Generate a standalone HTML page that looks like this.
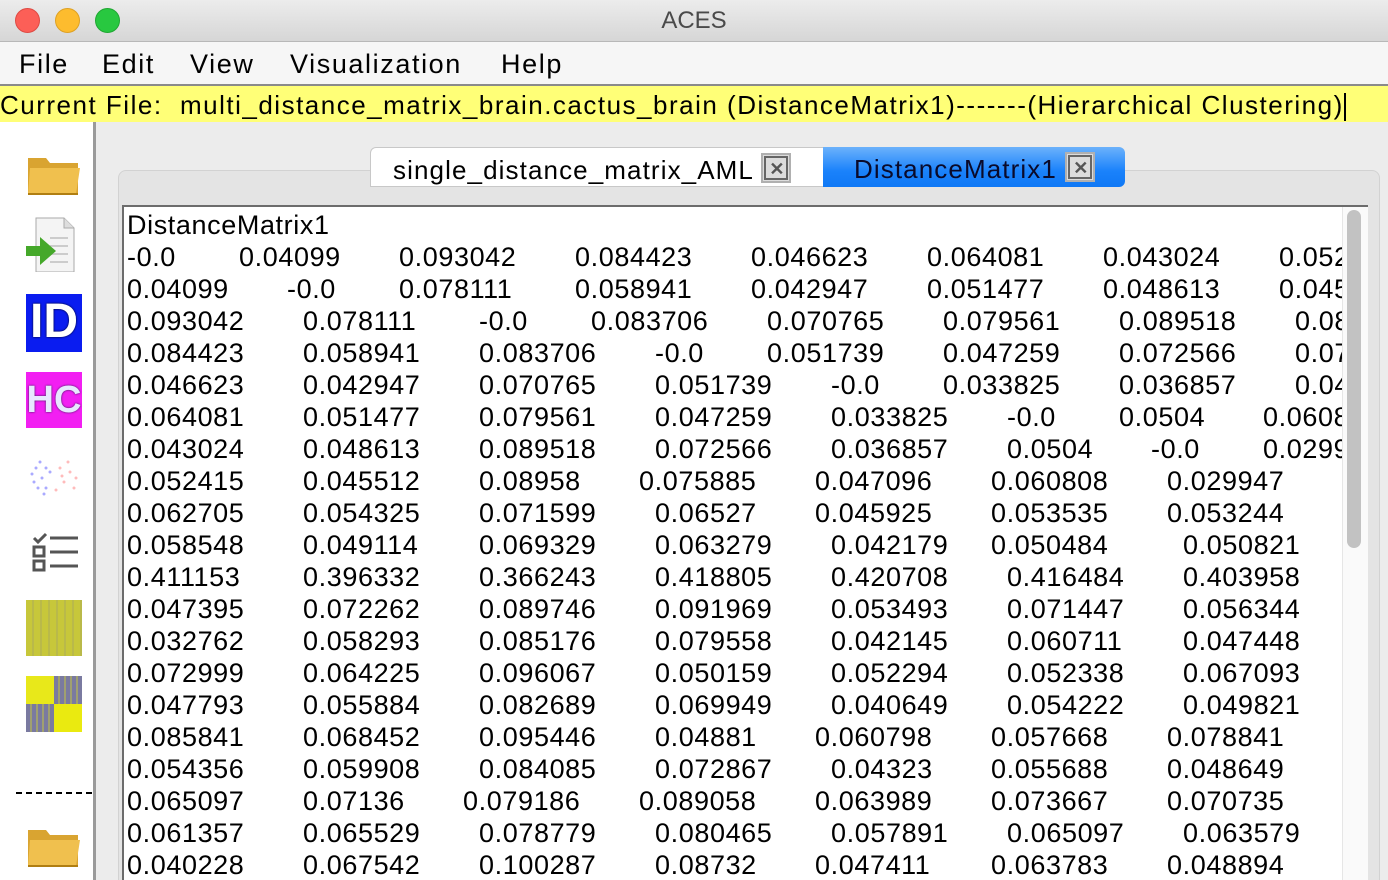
<!DOCTYPE html>
<html><head><meta charset="utf-8"><style>
*{margin:0;padding:0;box-sizing:border-box}
html,body{width:1388px;height:880px;overflow:hidden}
body{background:#ececec;font-family:"Lucida Grande","Liberation Sans",sans-serif;position:relative;color:#000}
.a{position:absolute}
#title{left:0;top:0;width:1388px;height:42px;background:linear-gradient(#ececec,#d6d6d6);border-bottom:1px solid #b8b8b8;text-align:center;font-size:24px;line-height:42px;color:#4a4a4a}
.dot{position:absolute;top:8px;width:25px;height:25px;border-radius:50%}
#menu{left:0;top:42px;width:1388px;height:44px;background:#f6f6f6;border-bottom:2px solid #8a8a8a;font-size:27px;line-height:44px;letter-spacing:1.6px}
#menu span{position:absolute;top:0}
#cur{left:0;top:86px;width:1388px;height:36px;background:#ffff77;font-size:26px;line-height:38px;white-space:nowrap;letter-spacing:1.5px}
#left{left:0;top:122px;width:96px;height:758px;background:#fff;border-right:3px solid #9a9a9a}
#tabp{left:118px;top:170px;width:1262px;height:720px;border:1px solid #d2d2d2;border-radius:8px;background:#e4e4e4}
.tab{position:absolute;top:147px;height:40px;font-size:26px;line-height:44px;letter-spacing:1.1px;white-space:nowrap}
.x{display:inline-block;width:30px;height:30px;border:2px solid #b0b0b0;background:#dcdcdc;vertical-align:middle;margin-top:-8px;position:relative;outline:2px solid #666;outline-offset:-5px}
.x:after{content:"✕";position:absolute;left:6px;top:-8px;font-size:18px;color:#555;font-weight:bold}
#txt{left:122px;top:205px;width:1246px;height:700px;background:#fff;border:2px solid #6c6c6c;border-right:none;overflow:hidden}
.r{position:absolute;left:0;height:32px;width:1340px;font-size:27px;line-height:32px;letter-spacing:0.6px;white-space:nowrap}
.r span{position:absolute;top:0}
#sb{left:1342px;top:207px;width:26px;height:680px;background:#fafafa;border-left:1px solid #e6e6e6}
#th{left:1347px;top:210px;width:14px;height:338px;background:#c2c2c2;border-radius:7px}
.ic{position:absolute;left:26px;width:56px;height:56px}
</style></head><body>
<div class="a" id="title">ACES
<div class="dot" style="left:15px;background:#fc5f57;border:1px solid #de4a43"></div>
<div class="dot" style="left:55px;background:#fdbc2e;border:1px solid #dea123"></div>
<div class="dot" style="left:95px;background:#28c840;border:1px solid #1fa732"></div>
</div>
<div class="a" id="menu"><span style="left:19px">File</span><span style="left:102px">Edit</span><span style="left:190px">View</span><span style="left:290px">Visualization</span><span style="left:501px">Help</span></div>
<div class="a" id="cur">Current File:&nbsp; multi_distance_matrix_brain.cactus_brain (DistanceMatrix1)-------(Hierarchical Clustering)<span style="display:inline-block;width:2px;height:28px;background:#000;vertical-align:middle"></span></div>
<div class="a" id="left">
<svg class="ic" style="top:28px" viewBox="0 0 56 56"><path d="M2 8h18l4 5h28v30H2z" fill="#d9a431"/><path d="M4 18h50l-4 26H2z" fill="#f0c04e"/><path d="M2 44h50" stroke="#b07e12" stroke-width="2"/></svg>
<svg class="ic" style="top:94px" viewBox="0 0 56 56"><path d="M10 2h28l10 10v44H10z" fill="#f4f4f4" stroke="#aaa"/><path d="M38 2v10h10" fill="#ddd" stroke="#aaa"/><g stroke="#ccc" stroke-width="2"><path d="M24 22h18M24 30h18M24 38h18M24 46h18"/></g><path d="M0 30h14v-9l16 14-16 14v-9H0z" fill="#45a82a"/></svg>
<div class="ic" style="top:172px;background:#0a1cf0;color:#fff;font:bold 48px/56px 'Liberation Sans',sans-serif;text-align:center;height:58px;text-shadow:0 0 2px #000">ID</div>
<div class="ic" style="top:250px;background:#f21ff2;color:#e8e8ff;font:bold 38px/56px 'Liberation Sans',sans-serif;text-align:center;text-shadow:0 0 2px #224">HC</div>
<svg class="ic" style="top:326px" viewBox="0 0 56 56"><g fill="#aaf"><circle cx="10" cy="20" r="1.5"/><circle cx="16" cy="30" r="1.5"/><circle cx="8" cy="34" r="1.5"/><circle cx="20" cy="40" r="1.5"/><circle cx="14" cy="14" r="1.5"/><circle cx="24" cy="24" r="1.5"/><circle cx="18" cy="46" r="1.5"/><circle cx="6" cy="26" r="1.5"/><circle cx="12" cy="40" r="1.5"/><circle cx="20" cy="20" r="1.5"/></g><g fill="#fbb"><circle cx="34" cy="20" r="1.5"/><circle cx="44" cy="24" r="1.5"/><circle cx="38" cy="34" r="1.5"/><circle cx="50" cy="30" r="1.5"/><circle cx="30" cy="42" r="1.5"/><circle cx="42" cy="14" r="1.5"/><circle cx="48" cy="40" r="1.5"/><circle cx="36" cy="28" r="1.5"/></g></svg>
<svg class="ic" style="top:402px" viewBox="0 0 56 56"><g stroke="#555" stroke-width="3" fill="none"><path d="M8 14l4 4 8-8M24 14h28M24 28h28M24 42h28"/><rect x="8" y="23" width="10" height="9"/><rect x="8" y="37" width="10" height="9"/></g></svg>
<div class="ic" style="top:478px;background:repeating-linear-gradient(90deg,#c7c73a 0 6px,#b9b94a 6px 8px),#c9c93a"></div>
<div class="ic" style="top:554px;background:#e8e81a"><div style="position:absolute;left:0;top:28px;width:28px;height:28px;background:repeating-linear-gradient(90deg,#7a7aa0 0 4px,#a0a070 4px 6px)"></div><div style="position:absolute;left:28px;top:28px;width:28px;height:28px;background:#eaea10"></div><div style="position:absolute;left:28px;top:0;width:28px;height:28px;background:repeating-linear-gradient(90deg,#7a7aa0 0 4px,#a0a070 4px 6px)"></div></div>
<div class="a" style="left:16px;top:670px;width:76px;border-top:2px dashed #000"></div>
<svg class="ic" style="top:700px" viewBox="0 0 56 56"><path d="M2 8h18l4 5h28v30H2z" fill="#d9a431"/><path d="M4 18h50l-4 26H2z" fill="#f0c04e"/><path d="M2 44h50" stroke="#b07e12" stroke-width="2"/></svg>
</div>
<div class="a" id="tabp"></div>
<div class="tab" style="left:370px;width:454px;background:#fff;border:1px solid #c8c8c8;border-radius:6px 0 0 0;padding-left:22px">single_distance_matrix_AML <span class="x"></span></div>
<div class="tab" style="left:823px;width:302px;background:linear-gradient(#6cb2fb,#1a82fb 60%,#0f78f5);border-radius:0 6px 6px 0;padding-left:31px;color:#0a0a2a">DistanceMatrix1 <span class="x"></span></div>
<div class="a" id="txt">
<div class="r" style="top:2px"><span style="left:3px">DistanceMatrix1</span></div>
<div class="r" style="top:34px"><span style="left:3px">-0.0</span><span style="left:115px">0.04099</span><span style="left:275px">0.093042</span><span style="left:451px">0.084423</span><span style="left:627px">0.046623</span><span style="left:803px">0.064081</span><span style="left:979px">0.043024</span><span style="left:1155px">0.052415</span></div>
<div class="r" style="top:66px"><span style="left:3px">0.04099</span><span style="left:163px">-0.0</span><span style="left:275px">0.078111</span><span style="left:451px">0.058941</span><span style="left:627px">0.042947</span><span style="left:803px">0.051477</span><span style="left:979px">0.048613</span><span style="left:1155px">0.045512</span></div>
<div class="r" style="top:98px"><span style="left:3px">0.093042</span><span style="left:179px">0.078111</span><span style="left:355px">-0.0</span><span style="left:467px">0.083706</span><span style="left:643px">0.070765</span><span style="left:819px">0.079561</span><span style="left:995px">0.089518</span><span style="left:1171px">0.08958</span></div>
<div class="r" style="top:130px"><span style="left:3px">0.084423</span><span style="left:179px">0.058941</span><span style="left:355px">0.083706</span><span style="left:531px">-0.0</span><span style="left:643px">0.051739</span><span style="left:819px">0.047259</span><span style="left:995px">0.072566</span><span style="left:1171px">0.075885</span></div>
<div class="r" style="top:162px"><span style="left:3px">0.046623</span><span style="left:179px">0.042947</span><span style="left:355px">0.070765</span><span style="left:531px">0.051739</span><span style="left:707px">-0.0</span><span style="left:819px">0.033825</span><span style="left:995px">0.036857</span><span style="left:1171px">0.047096</span></div>
<div class="r" style="top:194px"><span style="left:3px">0.064081</span><span style="left:179px">0.051477</span><span style="left:355px">0.079561</span><span style="left:531px">0.047259</span><span style="left:707px">0.033825</span><span style="left:883px">-0.0</span><span style="left:995px">0.0504</span><span style="left:1139px">0.060808</span></div>
<div class="r" style="top:226px"><span style="left:3px">0.043024</span><span style="left:179px">0.048613</span><span style="left:355px">0.089518</span><span style="left:531px">0.072566</span><span style="left:707px">0.036857</span><span style="left:883px">0.0504</span><span style="left:1027px">-0.0</span><span style="left:1139px">0.029947</span></div>
<div class="r" style="top:258px"><span style="left:3px">0.052415</span><span style="left:179px">0.045512</span><span style="left:355px">0.08958</span><span style="left:515px">0.075885</span><span style="left:691px">0.047096</span><span style="left:867px">0.060808</span><span style="left:1043px">0.029947</span></div>
<div class="r" style="top:290px"><span style="left:3px">0.062705</span><span style="left:179px">0.054325</span><span style="left:355px">0.071599</span><span style="left:531px">0.06527</span><span style="left:691px">0.045925</span><span style="left:867px">0.053535</span><span style="left:1043px">0.053244</span></div>
<div class="r" style="top:322px"><span style="left:3px">0.058548</span><span style="left:179px">0.049114</span><span style="left:355px">0.069329</span><span style="left:531px">0.063279</span><span style="left:707px">0.042179</span><span style="left:867px">0.050484</span><span style="left:1059px">0.050821</span></div>
<div class="r" style="top:354px"><span style="left:3px">0.411153</span><span style="left:179px">0.396332</span><span style="left:355px">0.366243</span><span style="left:531px">0.418805</span><span style="left:707px">0.420708</span><span style="left:883px">0.416484</span><span style="left:1059px">0.403958</span></div>
<div class="r" style="top:386px"><span style="left:3px">0.047395</span><span style="left:179px">0.072262</span><span style="left:355px">0.089746</span><span style="left:531px">0.091969</span><span style="left:707px">0.053493</span><span style="left:883px">0.071447</span><span style="left:1059px">0.056344</span></div>
<div class="r" style="top:418px"><span style="left:3px">0.032762</span><span style="left:179px">0.058293</span><span style="left:355px">0.085176</span><span style="left:531px">0.079558</span><span style="left:707px">0.042145</span><span style="left:883px">0.060711</span><span style="left:1059px">0.047448</span></div>
<div class="r" style="top:450px"><span style="left:3px">0.072999</span><span style="left:179px">0.064225</span><span style="left:355px">0.096067</span><span style="left:531px">0.050159</span><span style="left:707px">0.052294</span><span style="left:883px">0.052338</span><span style="left:1059px">0.067093</span></div>
<div class="r" style="top:482px"><span style="left:3px">0.047793</span><span style="left:179px">0.055884</span><span style="left:355px">0.082689</span><span style="left:531px">0.069949</span><span style="left:707px">0.040649</span><span style="left:883px">0.054222</span><span style="left:1059px">0.049821</span></div>
<div class="r" style="top:514px"><span style="left:3px">0.085841</span><span style="left:179px">0.068452</span><span style="left:355px">0.095446</span><span style="left:531px">0.04881</span><span style="left:691px">0.060798</span><span style="left:867px">0.057668</span><span style="left:1043px">0.078841</span></div>
<div class="r" style="top:546px"><span style="left:3px">0.054356</span><span style="left:179px">0.059908</span><span style="left:355px">0.084085</span><span style="left:531px">0.072867</span><span style="left:707px">0.04323</span><span style="left:867px">0.055688</span><span style="left:1043px">0.048649</span></div>
<div class="r" style="top:578px"><span style="left:3px">0.065097</span><span style="left:179px">0.07136</span><span style="left:339px">0.079186</span><span style="left:515px">0.089058</span><span style="left:691px">0.063989</span><span style="left:867px">0.073667</span><span style="left:1043px">0.070735</span></div>
<div class="r" style="top:610px"><span style="left:3px">0.061357</span><span style="left:179px">0.065529</span><span style="left:355px">0.078779</span><span style="left:531px">0.080465</span><span style="left:707px">0.057891</span><span style="left:883px">0.065097</span><span style="left:1059px">0.063579</span></div>
<div class="r" style="top:642px"><span style="left:3px">0.040228</span><span style="left:179px">0.067542</span><span style="left:355px">0.100287</span><span style="left:531px">0.08732</span><span style="left:691px">0.047411</span><span style="left:867px">0.063783</span><span style="left:1043px">0.048894</span></div>
</div>
<div class="a" id="sb"></div>
<div class="a" id="th"></div>
</body></html>
